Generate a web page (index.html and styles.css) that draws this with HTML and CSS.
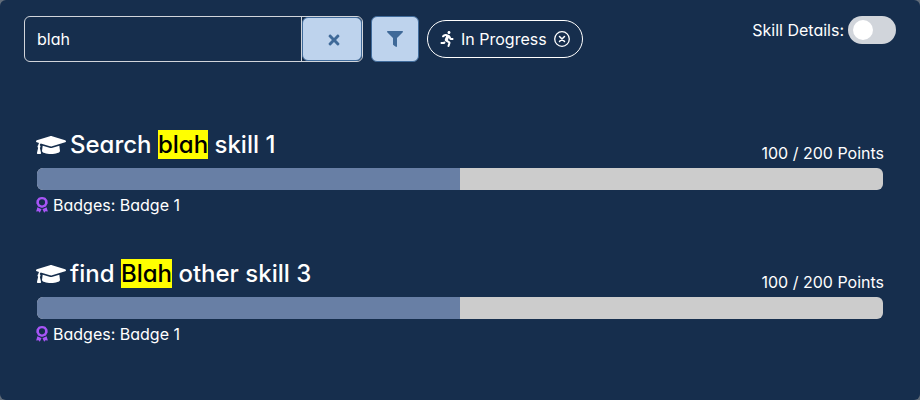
FILE: index.html
```html
<!DOCTYPE html>
<html lang="en">
<head>
<meta charset="utf-8">
<meta name="viewport" content="width=device-width, initial-scale=1">
<title>Skills</title>
<link rel="stylesheet" href="styles.css">
</head>
<body>
<svg class="sprite" aria-hidden="true">
  <symbol id="cap" viewBox="0 0 640 512"><path d="M622.34 153.2L343.4 67.5c-15.2-4.67-31.6-4.67-46.79 0L17.66 153.2c-23.54 7.23-23.54 38.36 0 45.59l48.63 14.94c-10.67 13.19-17.23 29.28-17.88 46.9C38.78 266.15 32 276.11 32 288c0 10.78 5.68 19.85 13.86 25.65L20.33 428.53C18.11 438.52 25.71 448 35.94 448h56.11c10.24 0 17.84-9.48 15.62-19.47L82.14 313.65C90.32 307.85 96 298.78 96 288c0-11.57-6.47-21.25-15.66-26.87.76-15.02 8.44-28.3 20.69-36.72L296.6 284.5c9.06 2.78 26.44 6.25 46.79 0l278.95-85.7c23.55-7.24 23.55-38.36 0-45.6zM352.79 315.09c-28.53 8.76-52.84 3.92-65.59 0l-145.02-44.55L128 384c0 35.35 85.96 64 192 64s192-28.65 192-64l-14.18-113.47-145.03 44.56z"/></symbol>
  <symbol id="award" viewBox="0 0 384 512"><path fill-rule="evenodd" d="M192 0l56 8 54 14 30 40 32 40 8 54 0 50-26 44-26 50-52 22-50 24-26-4-26 4-50-24-52-22-26-50-26-44 0-50 8-54 32-40 30-40 54-14zM192 72a98 98 0 1 0 0 196 98 98 0 1 0 0-196z"/><path d="M46 326l50 24 48 24 34 8-56 124-40-48-78 6zM338 326l-50 24-48 24-34 8 56 124 40-48 78 6z"/></symbol>
</svg>
<main class="card">
  <header class="toolbar">
    <div class="search">
      <input class="search-input" type="text" value="blah" aria-label="Search skills">
      <button class="btn btn-clear" type="button" aria-label="Clear search">
        <svg class="icon-times" viewBox="0 0 352 512" aria-hidden="true"><path d="M242.72 256l100.07-100.07c12.28-12.28 12.28-32.19 0-44.48l-22.24-22.24c-12.28-12.28-32.19-12.28-44.48 0L176 189.28 75.93 89.21c-12.28-12.28-32.19-12.28-44.48 0L9.21 111.45c-12.28 12.28-12.28 32.19 0 44.48L109.28 256 9.21 356.07c-12.28 12.28-12.28 32.19 0 44.48l22.24 22.24c12.28 12.28 32.2 12.28 44.48 0L176 322.72l100.07 100.07c12.28 12.28 32.2 12.28 44.48 0l22.24-22.24c12.28-12.28 12.28-32.19 0-44.48L242.72 256z"/></svg>
      </button>
    </div>
    <button class="btn btn-filter" type="button" aria-label="Filter skills">
      <svg class="icon" viewBox="0 0 512 512" aria-hidden="true"><path d="M487.976 0H24.028C2.71 0-8.047 25.866 7.058 40.971L192 225.941V432c0 7.831 3.821 15.17 10.237 19.662l80 55.98C298.02 518.69 320 507.493 320 487.98V225.941l184.947-184.97C520.021 25.896 509.338 0 487.976 0z"/></svg>
    </button>
    <div class="chip">
      <svg class="icon-run" viewBox="0 0 416 512" aria-hidden="true"><path d="M272 96c26.51 0 48-21.49 48-48S298.51 0 272 0s-48 21.49-48 48 21.49 48 48 48zM113.69 317.47l-14.8 34.52H32c-17.67 0-32 14.33-32 32s14.33 32 32 32h77.45c19.25 0 36.58-11.44 44.11-29.09l8.79-20.52-10.67-6.3c-17.32-10.23-30.06-25.37-37.99-42.61zM384 223.99h-44.03l-26.06-53.25c-12.5-25.55-35.45-44.23-61.78-50.94l-71.08-21.14c-28.3-6.8-57.77-.55-80.84 17.14l-39.67 30.41c-14.03 10.75-16.69 30.83-5.92 44.86s30.84 16.66 44.86 5.92l39.69-30.41c7.67-5.89 17.44-8 25.27-6.14l14.7 4.37-37.46 87.39c-12.62 29.48-1.31 64.01 26.3 80.31l84.98 50.17-27.47 87.73c-5.28 16.86 4.11 34.82 20.97 40.09 3.19 1 6.41 1.48 9.58 1.48 13.61 0 26.23-8.77 30.52-22.45l31.64-101.06c5.91-20.77-2.89-43.08-21.64-54.39l-61.24-36.14 31.31-78.28 20.27 41.43c8 16.34 24.92 26.89 43.11 26.89H384c17.67 0 32-14.33 32-32s-14.33-31.99-32-31.99z"/></svg>
      <span>In Progress</span>
      <button class="chip-remove" type="button" aria-label="Remove filter">
        <svg class="icon" viewBox="0 0 16 16" aria-hidden="true"><g fill="none" stroke="currentColor" stroke-linecap="round"><circle cx="8" cy="8" r="7.3" stroke-width="1.3"/><path d="M5.5 5.5l5 5M10.5 5.5l-5 5" stroke-width="1.5"/></g></svg>
      </button>
    </div>
    <div class="details">
      <label for="details">Skill Details:</label>
      <input class="switch" id="details" type="checkbox" role="switch">
    </div>
  </header>

  <section class="skills">
    <article class="skill">
      <div class="skill-head">
        <h2 class="skill-title"><svg class="icon-cap" aria-hidden="true"><use href="#cap"/></svg><a href="#skill-1">Search <mark>blah</mark> skill 1</a></h2>
        <span class="points">100 / 200 Points</span>
      </div>
      <div class="bar" role="progressbar" aria-label="Points earned" aria-valuemin="0" aria-valuemax="200" aria-valuenow="100"><div class="bar-fill" style="width:50%"></div></div>
      <div class="badges"><svg class="icon-award" aria-hidden="true"><use href="#award"/></svg><span>Badges: <a href="#badge-1">Badge 1</a></span></div>
    </article>
    <article class="skill">
      <div class="skill-head">
        <h2 class="skill-title"><svg class="icon-cap" aria-hidden="true"><use href="#cap"/></svg><a href="#skill-3">find <mark>Blah</mark> other skill 3</a></h2>
        <span class="points">100 / 200 Points</span>
      </div>
      <div class="bar" role="progressbar" aria-label="Points earned" aria-valuemin="0" aria-valuemax="200" aria-valuenow="100"><div class="bar-fill" style="width:50%"></div></div>
      <div class="badges"><svg class="icon-award" aria-hidden="true"><use href="#award"/></svg><span>Badges: <a href="#badge-1">Badge 1</a></span></div>
    </article>
  </section>
</main>
</body>
</html>
```
FILE: styles.css
```css
* { box-sizing: border-box; }

body {
  margin: 0;
  background: #626d7a;
  color: #fff;
  font-family: Inter, "Liberation Sans", sans-serif;
  font-size: 16px;
  line-height: 24px;
  font-feature-settings: "cv11";
}

button, input { font: inherit; font-feature-settings: inherit; color: inherit; }
a { color: inherit; text-decoration: none; }
svg { display: block; flex: none; fill: currentColor; }

.sprite { position: absolute; width: 0; height: 0; }

.card {
  min-height: 100vh;
  padding: 16px 24px;
  border-radius: 6px;
  background: #162e4d;
}

.toolbar { display: flex; align-items: center; gap: 8px; }

.search {
  display: flex;
  width: 339px;
  height: 46px;
  border: 1px solid #d1d5db;
  border-radius: 6px;
}

.search-input {
  flex: 1;
  min-width: 0;
  padding: 0 12px;
  border: 0;
  border-right: 1px solid #d1d5db;
  background: transparent;
  outline: 0;
}

.btn {
  display: flex;
  align-items: center;
  justify-content: center;
  padding: 0;
  border: 1px solid #406b9b;
  border-radius: 6px;
  background: #bed3ed;
  color: #3f6998;
}

.btn-clear { width: 60px; padding: 2px 0 0 4px; }
.btn-filter { width: 48px; height: 46px; }

.icon { width: 16px; height: 16px; }
.icon-times { width: 12px; height: 16px; }
.icon-run { width: 14px; height: 16px; }
.icon-cap { width: 30px; height: 24px; }
.icon-award { width: 12px; height: 16px; color: #a855f7; }

.chip {
  display: flex;
  align-items: center;
  gap: 7px;
  height: 38px;
  padding: 0 12px;
  border: 1px solid #fff;
  border-radius: 19px;
}

.chip-remove { padding: 0; border: 0; background: transparent; }

.details {
  display: flex;
  align-items: center;
  align-self: flex-start;
  gap: 4px;
  margin-left: auto;
}

.switch {
  appearance: none;
  display: flex;
  align-items: center;
  width: 48px;
  height: 28px;
  margin: 0;
  padding: 0 5px;
  border-radius: 14px;
  background: #d1d5db;
}

.switch::before {
  content: "";
  width: 20px;
  height: 20px;
  border-radius: 50%;
  background: #fff;
}

.switch:checked::before { margin-left: auto; }

.skills {
  display: grid;
  gap: 41px;
  padding: 67px 12px 0;
}

.skill-head {
  display: flex;
  align-items: flex-end;
  justify-content: space-between;
  height: 36px;
}

.skill-title {
  display: flex;
  align-items: center;
  align-self: flex-start;
  gap: 4px;
  margin: 0;
  font-size: 24px;
  font-weight: 500;
  line-height: 32px;
}

mark { background: #ff0; color: #000; }

.bar {
  height: 22px;
  margin: 3px 1px;
  border-radius: 6px;
  background: #ccc;
  overflow: hidden;
}

.bar-fill { height: 100%; background: #687fa5; }

.badges { display: flex; align-items: center; gap: 5px; }
```
